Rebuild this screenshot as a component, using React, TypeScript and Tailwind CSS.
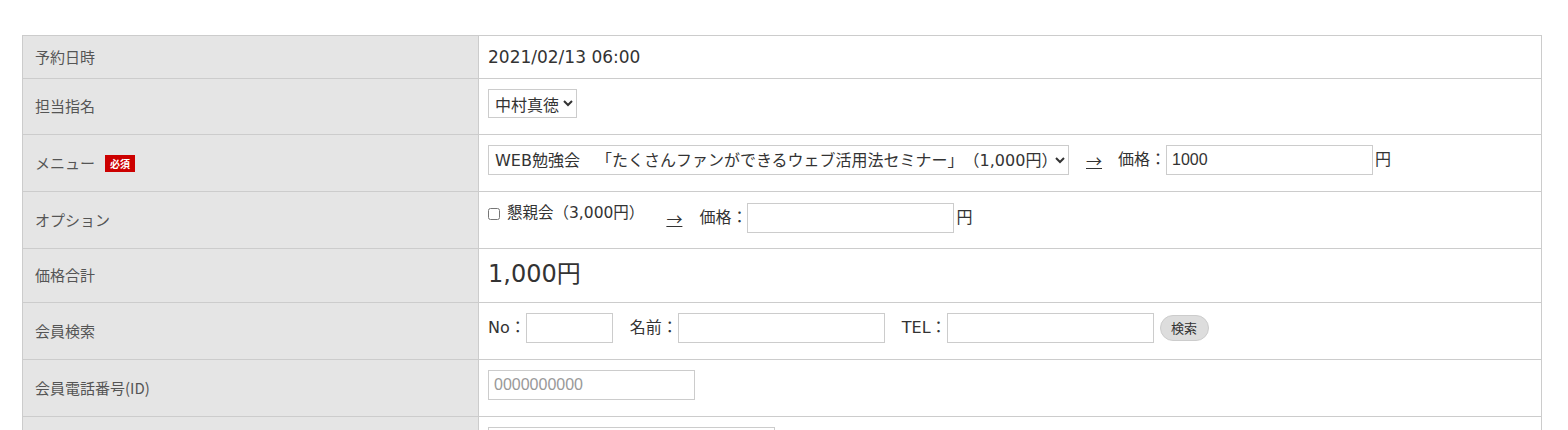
const font = { fontFamily: '"DejaVu Sans", "Noto Sans CJK JP", sans-serif' };
const cjk = { fontFamily: '"Noto Sans CJK JP", sans-serif' };
const field = { fontFamily: '"Liberation Sans", "Noto Sans CJK JP", sans-serif' };

function Label({ children }: { children?: React.ReactNode }) {
  return (
    <th
      className="w-[456px] bg-[#e5e5e5] border border-[#cccccc] pl-3 text-left align-middle text-[15px] font-normal text-[#555555]"
      style={cjk}
    >
      {children}
    </th>
  );
}

function Cell({ children }: { children: React.ReactNode }) {
  return (
    <td className="border border-[#cccccc] pl-[9px] pt-[10px] align-top text-[16px] text-[#333333]">
      {children}
    </td>
  );
}

function TextBox({ w, value, placeholder }: { w: string; value?: string; placeholder?: string }) {
  return (
    <input
      type="text"
      defaultValue={value}
      placeholder={placeholder}
      className={`${w} h-[30px] border border-[#cccccc] bg-white px-[5px] text-[16px] text-[#333333] placeholder:text-[#999999] outline-none`}
      style={field}
    />
  );
}

function Arrow({ className }: { className: string }) {
  return (
    <span className={`${className} underline`} style={cjk}>
      →
    </span>
  );
}

export default function App() {
  return (
    <div className="bg-white min-h-screen pt-[35px] px-[22px] [text-spacing-trim:space-all]" style={font}>
      <table className="w-[1520px] border-collapse">
        <tbody>
          <tr className="h-[43px]">
            <Label>予約日時</Label>
            <Cell>
              <span className="text-[17px] leading-[22px]">2021/02/13 06:00</span>
            </Cell>
          </tr>
          <tr className="h-[56px]">
            <Label>担当指名</Label>
            <Cell>
              <select
                className="block h-[29px] border border-[#cccccc] bg-white pl-[2px] text-[16px] text-[#333333]"
                style={cjk}
              >
                <option>中村真徳</option>
              </select>
            </Cell>
          </tr>
          <tr className="h-[57px]">
            <Label>
              <span className="inline-flex items-center">
                メニュー
                <span className="ml-[10px] bg-[#cc0000] px-[5px] text-[10px] font-bold leading-[17px] text-white">
                  必須
                </span>
              </span>
            </Label>
            <Cell>
              <div className="flex items-center">
                <select
                  className="h-[30px] w-[581px] border border-[#cccccc] bg-white pl-[2px] text-[16px] text-[#333333] [text-spacing-trim:space-all]"
                  style={font}
                >
                  <option>WEB勉強会　「たくさんファンができるウェブ活用法セミナー」（1,000円）</option>
                </select>
                <Arrow className="ml-[17px] mr-[16px]" />
                <span>価格：</span>
                <TextBox w="w-[207px]" value="1000" />
                <span className="ml-[2px]">円</span>
              </div>
            </Cell>
          </tr>
          <tr className="h-[57px]">
            <Label>オプション</Label>
            <Cell>
              <div className="flex items-center">
                <label className="mb-[8px] flex items-center text-[15.5px]">
                  <input type="checkbox" className="m-0 mr-[7px] h-[12px] w-[12px]" />
                  懇親会（3,000円）
                </label>
                <Arrow className="ml-[22px] mr-[17px]" />
                <span>価格：</span>
                <TextBox w="w-[207px]" />
                <span className="ml-[2px]">円</span>
              </div>
            </Cell>
          </tr>
          <tr className="h-[54px]">
            <Label>価格合計</Label>
            <Cell>
              <span className="text-[24px] leading-[30px]">1,000円</span>
            </Cell>
          </tr>
          <tr className="h-[57px]">
            <Label>会員検索</Label>
            <Cell>
              <div className="flex items-center">
                <span>No：</span>
                <TextBox w="w-[87px]" />
                <span className="ml-[17px]">名前：</span>
                <TextBox w="w-[207px]" />
                <span className="ml-[17px]">TEL：</span>
                <TextBox w="w-[207px]" />
                <button
                  className="ml-[6px] h-[26px] w-[49px] rounded-full border border-[#cccccc] bg-[#dddddd] text-[13px] text-[#333333]"
                  style={cjk}
                >
                  検索
                </button>
              </div>
            </Cell>
          </tr>
          <tr className="h-[57px]">
            <Label>会員電話番号(ID)</Label>
            <Cell>
              <TextBox w="w-[207px]" placeholder="0000000000" />
            </Cell>
          </tr>
          <tr className="h-[57px]">
            <Label />
            <Cell>
              <TextBox w="w-[287px]" />
            </Cell>
          </tr>
        </tbody>
      </table>
    </div>
  );
}
